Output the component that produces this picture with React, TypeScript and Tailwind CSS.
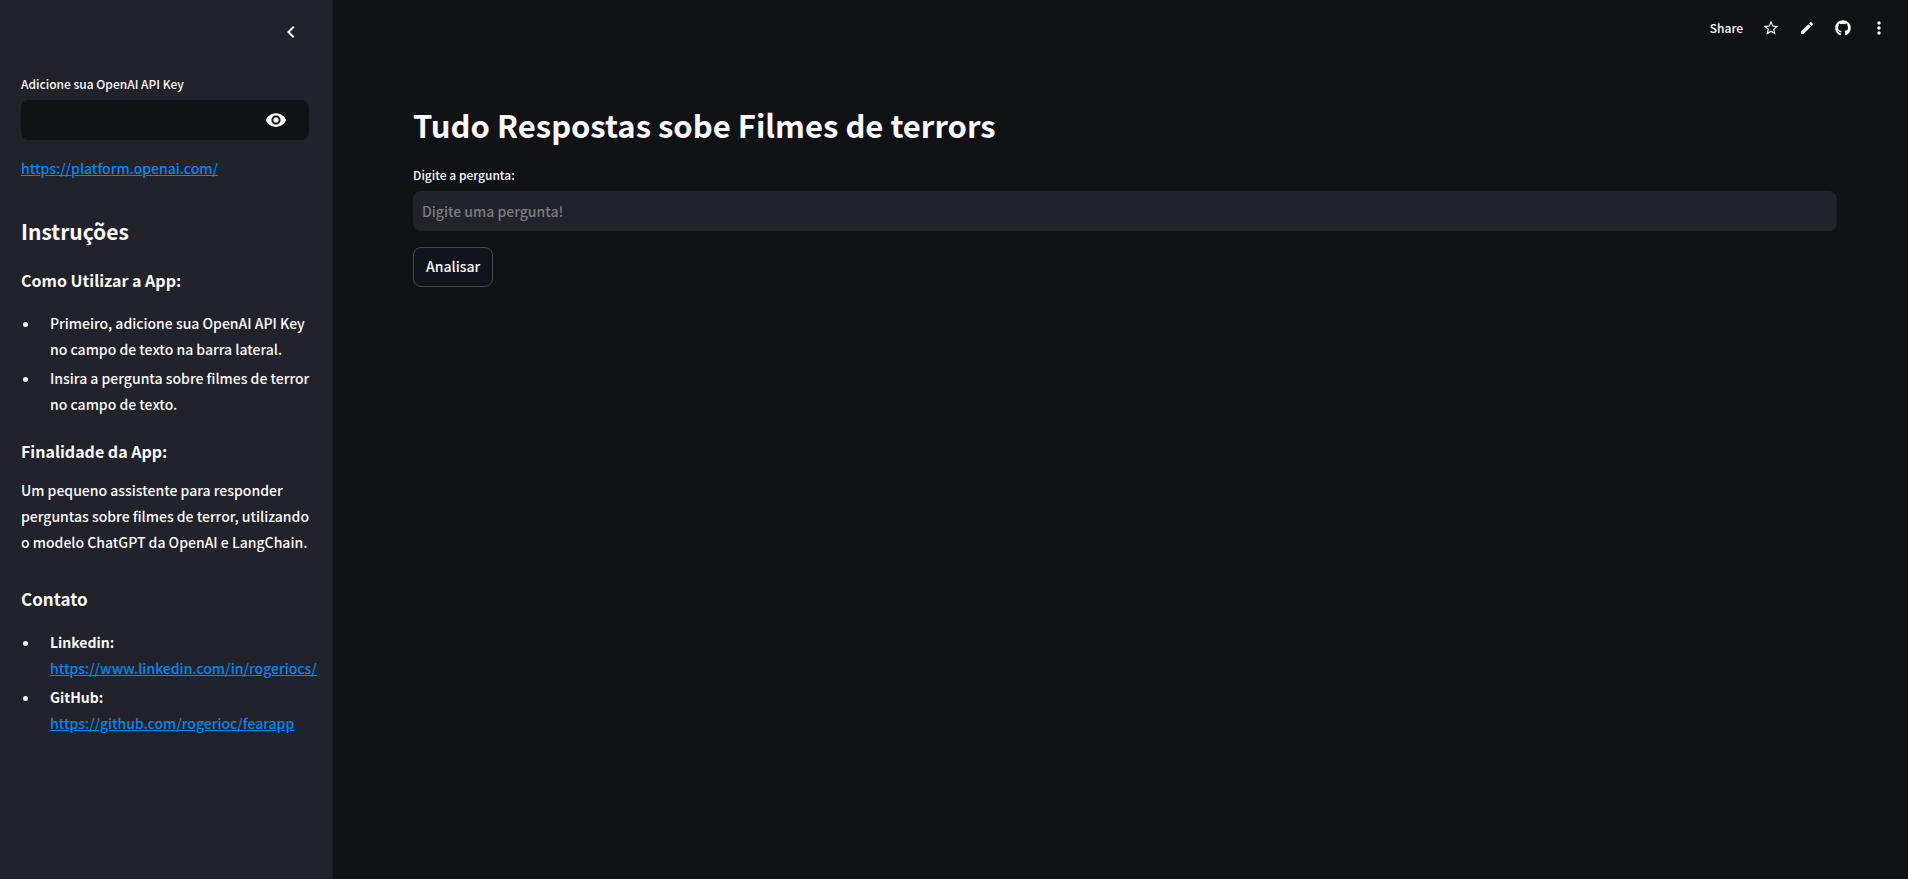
import { useState } from "react";
import { FaGithub } from "react-icons/fa";
import { MdChevronLeft, MdEdit, MdMoreVert, MdStarOutline, MdVisibility } from "react-icons/md";

const linkClass = "text-[#0088f0] underline";

function Sidebar() {
  const [visible, setVisible] = useState(false);
  return (
    <aside className="w-[333px] shrink-0 bg-[#22222b] px-[21px] pb-24">
      <div className="flex h-16 items-center justify-end pr-[9px]">
        <button type="button" aria-label="Recolher" className="flex size-6 items-center justify-center">
          <MdChevronLeft className="size-6" />
        </button>
      </div>
      <div className="pt-[10px]">
        <label htmlFor="key" className="block text-xs leading-5">
          Adicione sua OpenAI API Key
        </label>
        <div className="mt-[6px] flex h-10 w-[288px] items-center rounded-lg bg-[#111216] pr-[22px]">
          <input id="key" type={visible ? "text" : "password"} className="h-full min-w-0 flex-1 bg-transparent px-2 outline-none" />
          <button type="button" aria-label="Mostrar" onClick={() => setVisible(!visible)}>
            <MdVisibility className="size-[22px]" />
          </button>
        </div>
      </div>
      <p className="mt-[15px]">
        <a href="https://platform.openai.com/" className={linkClass}>https://platform.openai.com/</a>
      </p>
      <h2 className="mt-9 text-[21px] leading-7 font-bold">Instruções</h2>
      <h4 className="mt-[23px] text-base leading-6 font-bold">Como Utilizar a App:</h4>
      <ul className="mt-[18px] flex list-disc flex-col gap-[3px] pl-[19px]">
        <li className="pl-[10px]">Primeiro, adicione sua OpenAI API Key no campo de texto na barra lateral.</li>
        <li className="pl-[10px]">Insira a pergunta sobre filmes de terror no campo de texto.</li>
      </ul>
      <h4 className="mt-[22px] text-base leading-6 font-bold">Finalidade da App:</h4>
      <p className="mt-[14px]">
        Um pequeno assistente para responder perguntas sobre filmes de terror, utilizando o modelo ChatGPT da OpenAI e LangChain.
      </p>
      <h3 className="mt-8 text-[17px] leading-6 font-bold">Contato</h3>
      <ul className="mt-[18px] flex list-disc flex-col gap-[3px] pl-[19px]">
        <li className="pl-[10px]">
          <strong className="block">Linkedin:</strong>
          <a href="https://www.linkedin.com/in/rogeriocs/" className={`${linkClass} whitespace-nowrap`}>https://www.linkedin.com/in/rogeriocs/</a>
        </li>
        <li className="pl-[10px]">
          <strong className="block">GitHub:</strong>
          <a href="https://github.com/rogerioc/fearapp" className={linkClass}>https://github.com/rogerioc/fearapp</a>
        </li>
      </ul>
    </aside>
  );
}

function Toolbar() {
  return (
    <header className="flex h-14 items-center justify-end gap-4 pr-[19px] text-xs">
      <button type="button" className="mr-[2px]">Share</button>
      <button type="button" aria-label="Favoritar" className="flex size-5 items-center justify-center">
        <MdStarOutline className="size-[18px]" />
      </button>
      <button type="button" aria-label="Editar" className="flex size-5 items-center justify-center">
        <MdEdit className="size-4" />
      </button>
      <button type="button" aria-label="GitHub" className="flex size-5 items-center justify-center">
        <FaGithub className="size-4" />
      </button>
      <button type="button" aria-label="Menu" className="flex size-5 items-center justify-center">
        <MdMoreVert className="size-5" />
      </button>
    </header>
  );
}

export default function App() {
  return (
    <div className="flex min-h-screen bg-[#111216] font-['Noto_Sans_CJK_SC','Noto_Sans_CJK_JP',sans-serif] text-[14px] leading-[26px] font-medium text-[#fafafa]">
      <Sidebar />
      <main className="min-w-0 flex-1">
        <Toolbar />
        <div className="pr-[71px] pl-20">
          <h1 className="pt-[47px] text-[31px] leading-[44px] font-bold">Tudo Respostas sobe Filmes de terrors</h1>
          <label htmlFor="question" className="mt-[18px] block text-xs leading-5">
            Digite a pergunta:
          </label>
          <input
            id="question"
            type="text"
            placeholder="Digite uma pergunta!"
            className="mt-[6px] block h-10 w-full rounded-lg bg-[#22222b] px-[9px] outline-none placeholder:text-[#7b7b80]"
          />
          <button type="button" className="mt-4 h-10 rounded-lg border border-[#45464b] bg-[#12141d] px-3 pb-[2px]">
            Analisar
          </button>
        </div>
      </main>
    </div>
  );
}
